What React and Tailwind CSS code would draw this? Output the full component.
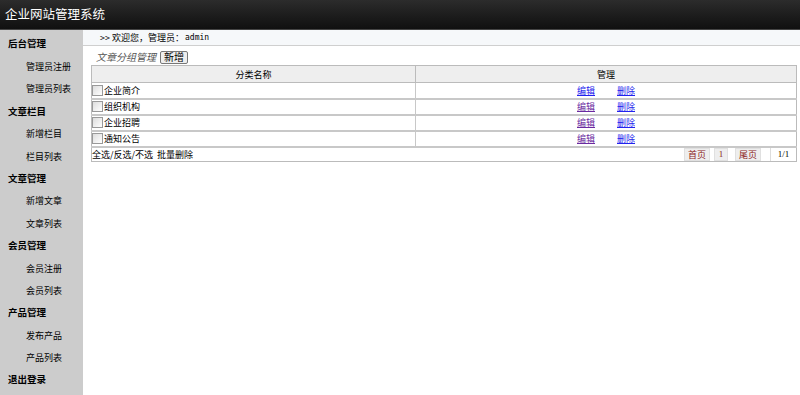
const menu = [
  { t: '后台管理', h: true },
  { t: '管理员注册' },
  { t: '管理员列表' },
  { t: '文章栏目', h: true },
  { t: '新增栏目' },
  { t: '栏目列表' },
  { t: '文章管理', h: true },
  { t: '新增文章' },
  { t: '文章列表' },
  { t: '会员管理', h: true },
  { t: '会员注册' },
  { t: '会员列表' },
  { t: '产品管理', h: true },
  { t: '发布产品' },
  { t: '产品列表' },
  { t: '退出登录', h: true },
]

const rows = ['企业简介', '组织机构', '企业招聘', '通知公告']

export default function App() {
  return (
    <div className="flex h-[395px] w-[800px] flex-col overflow-hidden bg-white text-[9px] leading-none text-black" style={{ fontFamily: '"Noto Sans CJK SC", "Liberation Sans", sans-serif' }}>
      <div className="flex h-[30px] shrink-0 items-center border-b border-[#444] bg-gradient-to-b from-[#2c2c2c] to-[#101010] px-[5px] text-[12.5px] text-white">
        企业网站管理系统
      </div>
      <div className="flex flex-1">
        <div className="w-[83px] shrink-0 bg-[#cccccc] pt-[3px]">
          {menu.map((m) => (
            <div key={m.t} className={`flex h-[22.4px] items-center whitespace-nowrap ${m.h ? 'pl-[8px] text-[9.5px] font-bold' : 'pl-[26px]'}`}>
              {m.t}
            </div>
          ))}
        </div>
        <div className="flex-1">
          <div className="flex h-[16px] items-center border-b border-[#cfcfcf] bg-[#f6f8fa] pl-[17px]">
            &gt;&gt; 欢迎您，管理员：<span className="ml-[1px] text-[8px]" style={{ fontFamily: '"DejaVu Sans Mono", monospace' }}>admin</span>
          </div>
          <div className="px-[8px] pt-[3px]">
            <div className="flex h-[16px] items-center gap-[4px] pl-[5px]">
              <span className="text-[10px] italic text-[#555]">文章分组管理</span>
              <span className="flex h-[13px] items-center rounded-[2px] border border-[#777] bg-[#eee] px-[3px] text-[10px]">新增</span>
            </div>
            <table className="w-[706px] border-collapse border border-[#bbb]">
              <thead>
                <tr className="h-[17px] bg-[#eeeeee]">
                  <th className="w-[324px] border border-[#bbb] p-0 text-center font-normal">分类名称</th>
                  <th className="border border-[#bbb] p-0 text-center font-normal">管理</th>
                </tr>
              </thead>
              <tbody>
                {rows.map((r, i) => (
                  <tr key={r} className="h-[16px]">
                    <td className="border-b-2 border-r border-[#c8c8c8] p-0">
                      <div className="flex items-center">
                        <span className="mr-[1px] inline-block h-[11px] w-[11px] border border-[#999] bg-gradient-to-br from-[#ddd] to-white" />
                        <span>{r}</span>
                      </div>
                    </td>
                    <td className="border-b-2 border-[#c8c8c8] p-0">
                      <div className="flex">
                        <span className={`ml-[161px] underline ${i === 0 ? 'text-[#2222ee]' : 'text-[#6a2aa0]'}`}>编辑</span>
                        <span className="ml-[22px] underline text-[#2222ee]">删除</span>
                      </div>
                    </td>
                  </tr>
                ))}
                <tr className="h-[14px]">
                  <td colSpan={2} className="p-0">
                    <div className="flex items-center justify-between">
                      <span>全选/反选/不选&nbsp;&nbsp;批量删除</span>
                      <div className="flex items-center text-[#8b1a1a]">
                        <span className="flex h-[13px] w-[26px] items-center justify-center border border-[#e0e0e0] bg-[#eee]">首页</span>
                        <span className="ml-[4px] flex h-[13px] w-[14px] items-center justify-center border border-[#e0e0e0] bg-[#eee]" style={{ fontFamily: '"Liberation Serif", serif' }}>1</span>
                        <span className="ml-[7px] flex h-[13px] w-[26px] items-center justify-center border border-[#e0e0e0] bg-[#eee]">尾页</span>
                        <span className="ml-[9px] flex h-[13px] w-[26px] items-center justify-center border-l border-[#ddd] text-black" style={{ fontFamily: '"Liberation Serif", serif' }}>1/1</span>
                      </div>
                    </div>
                  </td>
                </tr>
              </tbody>
            </table>
          </div>
        </div>
      </div>
    </div>
  )
}
